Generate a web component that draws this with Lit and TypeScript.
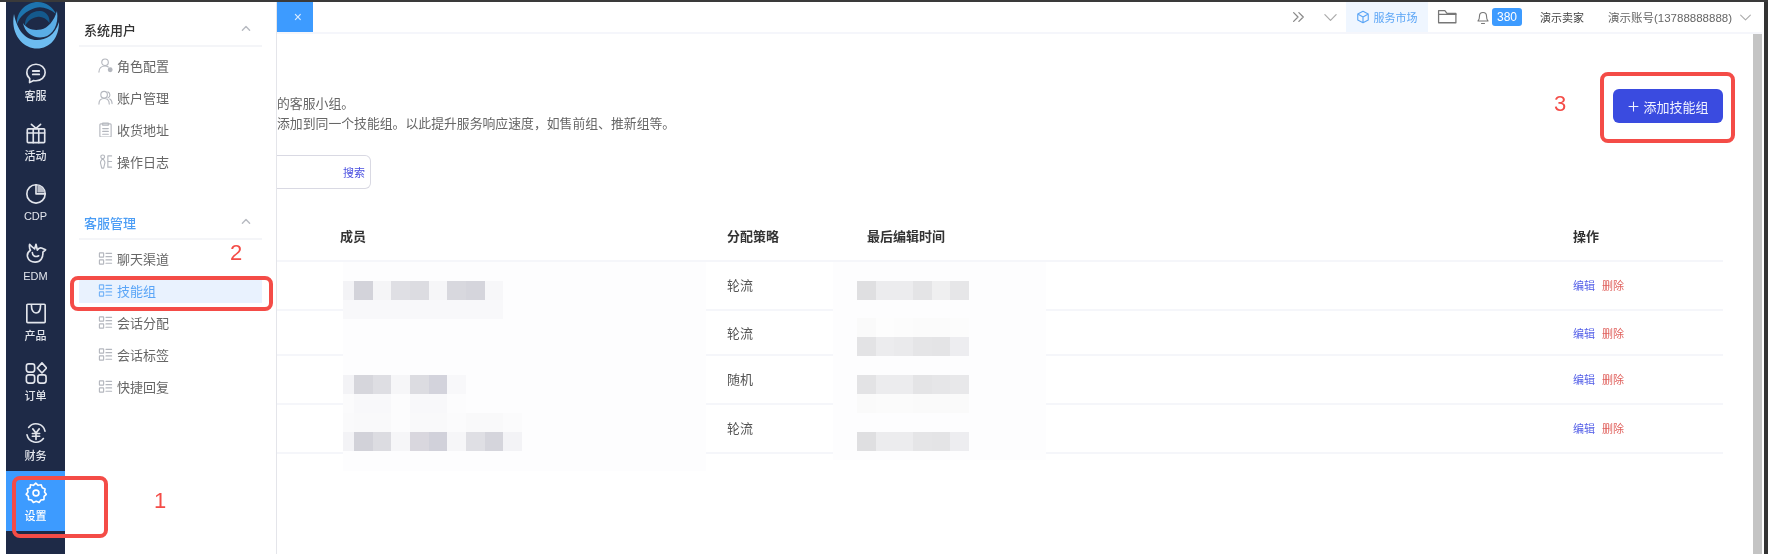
import { LitElement, html, css, svg } from "lit";
import { customElement } from "lit/decorators.js";

const I = (body: unknown, size = 24, vb = 24, sw = 1.8) =>
  html`<svg width=${size} height=${size} viewBox="0 0 ${vb} ${vb}" fill="none" stroke="currentColor" stroke-width=${sw} stroke-linecap="round" stroke-linejoin="round">${body}</svg>`;

const railIcons: Record<string, unknown> = {
  chat: svg`<path d="M12 2.500c5.600 0 10 3.900 10 9s-4.400 9-10 9c-.9 0-1.800-.1-2.600-.3L5 22.500l.2-4.400C3.200 16.400 2 14.100 2 11.500c0-5.100 4.400-9 10-9z"/><path d="M8.500 9.800h7M8.500 13.500h7" stroke-width="2"/>`,
  gift: svg`<rect x="2.500" y="7.500" width="19" height="15" rx="1"/><path d="M2.500 12h19M9 7.500v15M15 7.500v15"/><path d="M12 7 7 2.500M12 7l5-4.500"/>`,
  pie: svg`<circle cx="12" cy="13" r="10"/><path d="M12 3v10h10" /><path d="M13.500 3.500 13.500 11.500 21.500 11.500C21 7.500 17.500 4 13.500 3.500z" fill="#b9bdc9" stroke="none"/>`,
  bird: svg`<path d="M5 2.500C4.500 5.500 5 7.500 6 9c-3 2-4 5-3 8 1 3 4 5 8 5 6 0 9-5 8.500-11l3-2.500L18 6.500c-2-.5-3.500.5-4.500 2.500-.5-2-1-4.500-1.500-6.500-.5 2-1 3.500-1.500 5C9 6.500 7 5 5 2.500z"/><path d="M8 11.500c0 3.500 3 5.500 7 3.500"/>`,
  bag: svg`<path d="M3 2.500h18a1 1 0 0 1 1 1v18a1 1 0 0 1-1 1H3a1 1 0 0 1-1-1v-18a1 1 0 0 1 1-1z"/><path d="M7 3c0 6 2 9 5 9s5-3 5-9"/>`,
  order: svg`<rect x="1.500" y="2" width="9" height="9" rx="2.500"/><rect x="1.500" y="14" width="9" height="9" rx="2.500"/><rect x="14" y="14" width="9" height="9" rx="2.500"/><path d="M18.500 1l5 5.500-5 5.500-5-5.500z"/>`,
  yuan: svg`<path d="M21.800 10A10 10 0 0 0 4 6M2.200 14A10 10 0 0 0 20 18" /><path d="M8.500 7.500 12 12l3.500-4.500M8 12.500h8M8 15.500h8M12 12v7"/>`,
  gear: svg`<path d="M12 1.800l2.600 2.400 3.400-.6 1.200 3.300 3.200 1.300-.7 3.400 2 2.600-2.500 2.400-.1 3.500-3.400.4-2 2.800-3.200-1.300-3.200 1.300-2-2.800-3.400-.4-.1-3.500-2.500-2.400 2-2.600-.7-3.400 3.200-1.300L6 3.600l3.400.6z" transform="translate(0 -.5) scale(.98)"/><circle cx="12" cy="12" r="3.200"/>`,
};

const panelIcons: Record<string, unknown> = {
  role: svg`<circle cx="7.500" cy="4.500" r="3.500"/><path d="M1 15c0-4 2.500-6.500 6.500-6.500 1.500 0 2.500.4 3.500 1"/><circle cx="13" cy="12.500" r="2.600" fill="currentColor" stroke="none"/>`,
  users: svg`<circle cx="6.500" cy="5" r="3.500"/><path d="M1 15c0-4 2-6 5.500-6s5.500 2 5.500 6"/><path d="M10.500 2a3.500 3.500 0 0 1 0 6.500M12.500 9.500c1.500.8 2.500 2.500 2.500 5"/>`,
  clip: svg`<rect x="2" y="2" width="12" height="14" rx="1"/><path d="M5 1h6v2.500H5zM5 7h6M5 10h6M5 13h6"/>`,
  log: svg`<circle cx="5" cy="3" r="2"/><path d="M5 5c-2 2-3 4-2 6l1 4h2l1-4c1-2 0-4-2-6zM10.500 2v12h4M10.500 8h4M10.500 2h4"/>`,
  list: svg`<rect x="1.500" y="2" width="4.500" height="4.500" rx=".5"/><rect x="1.500" y="9.500" width="4.500" height="4.500" rx=".5"/><path d="M8.500 2.500h6M8.500 6h6M8.500 9.500h6M8.500 13h6"/>`,
};

const rail = [
  { icon: "chat", label: "客服" },
  { icon: "gift", label: "活动" },
  { icon: "pie", label: "CDP" },
  { icon: "bird", label: "EDM" },
  { icon: "bag", label: "产品" },
  { icon: "order", label: "订单" },
  { icon: "yuan", label: "财务" },
  { icon: "gear", label: "设置", active: true },
];

const rows = [
  { strategy: "轮流", short: false },
  { strategy: "轮流", short: true },
  { strategy: "随机", short: false },
  { strategy: "轮流", short: false },
];

const L = "#f8f8fa";
const memberBlocks = [
  { top: 19, cells: ["#f3f3f6", "#d3d3da", "#f5f5f7", "#dfdfe4", "#dcdce1", "#f6f6f8", "#d8d8de", "#d5d5dc", "#f7f7f9"] },
  { top: 38, cells: Array(9).fill(L) },
  { top: 113, cells: ["#f3f3f6", "#d6d6dc", "#dedee3", "#f6f6f8", "#dcdce1", "#d3d3dc", "#f8f8fa"] },
  { top: 132, cells: ["#fbfbfc", "#f8f8fa", "#f8f8fa", "#fcfcfd", "#f8f8fa", "#f8f8fa", "#fcfcfd"] },
  { top: 151, cells: ["#fafafb", "#f9f9fa", "#f9f9fa", "#fcfcfd", "#f9f9fa", "#f9f9fa", "#fbfbfc", "#f9f9fa", "#f9f9fa", "#fbfbfc"] },
  { top: 170, cells: ["#f3f3f6", "#d2d2d9", "#dcdce1", "#f6f6f8", "#d9d7de", "#d1d1da", "#f6f6f8", "#dfdfe4", "#d5d5dc", "#f3f3f6"] },
];
const timeBlocks = [
  { top: 19, cells: ["#dfdfe1", "#ececee", "#ececee", "#e4e4e6", "#efeff0", "#e6e6e8"] },
  { top: 56, cells: ["#fafafa", "#fdfdfd", "#fcfcfc", "#fbfbfb", "#fbfbfb", "#fcfcfc"] },
  { top: 75, cells: ["#e3e3e5", "#ececee", "#eaeaec", "#e5e5e7", "#e4e4e6", "#ededf0"] },
  { top: 113, cells: ["#e3e3e5", "#ececee", "#ececee", "#e4e4e6", "#e6e6e8", "#e8e8ea"] },
  { top: 132, cells: ["#fafafa", "#fbfbfb", "#fbfbfb", "#fafafa", "#fafafa", "#fafafa"] },
  { top: 170, cells: ["#dfdfe1", "#ececee", "#ececee", "#e5e5e7", "#e4e4e6", "#ededf0"] },
];

@customElement("app-root")
export class AppRoot extends LitElement {
  static styles = css`
    :host { display: block; width: 1768px; height: 554px; overflow: hidden; background: #fff;
      font-family: "Liberation Sans", "Noto Sans CJK SC", sans-serif; font-size: 13px; color: #555; }
    * { box-sizing: border-box; }
    .page { position: relative; width: 1768px; height: 554px; display: flex; flex-direction: column; filter: blur(0.5px); background: #fff; overflow: hidden; }
    .topline { height: 2px; background: #3a3a3a; flex: none; }
    .body { flex: 1; display: flex; min-height: 0; }
    .gutter { width: 6px; flex: none; background: #fff; }
    .rail { width: 59px; flex: none; background: #1e2a47; display: flex; flex-direction: column; color: #fff; }
    .logo { height: 49px; display: flex; justify-content: center; align-items: flex-start; overflow: hidden; padding-left: 1px; }
    .rail-item { height: 60px; display: flex; flex-direction: column; align-items: center; padding-top: 11px; color: #e2e5ec; font-size: 11px; line-height: 16px; gap: 4px; font-weight: 500; }
    .rail-item svg { display: block; flex: none; }
    .rail-item.active { background: #3d9bff; color: #fff; }
    .panel { width: 212px; flex: none; background: #fff; padding: 0 14px; border-right: 1px solid #e4e5ea; }
    .sec-head { height: 45px; padding: 11px 5px 0; display: flex; align-items: center; justify-content: space-between; border-bottom: 2px solid #f4f5f8; color: #333; font-weight: 500; }
    .sec-head .caret { color: #b8bbc2; display: flex; margin-right: 5px; }
    .section { margin-bottom: 18px; }
    .section.brand .sec-head { color: #4b9df5; }
    .items { padding-top: 2px; }
    .item { height: 32px; padding-left: 19px; display: flex; align-items: center; gap: 4px; color: #666; }
    .item svg { color: #b4b7be; flex: none; }
    .item.active { color: #5aa5f7; background: linear-gradient(#e9f2fe, #e9f2fe) center / 100% 25px no-repeat; }
    .item.active svg { color: #72b2f8; }
    .main { flex: 1; min-width: 0; display: flex; flex-direction: column; }
    .topbar { height: 32px; flex: none; display: flex; align-items: stretch; border-bottom: 2px solid #f5f6fb; }
    .tab { width: 36px; background: #3d9bff; color: #dcecff; display: flex; align-items: center; justify-content: flex-end; padding-right: 11px; font-size: 14px; }
    .spacer { flex: 1; }
    .tools { display: flex; align-items: center; height: 100%; font-size: 11px; }
    .glyph { color: #8a8a8a; display: flex; }
    .glyph.drop { margin-left: 18px; color: #aaa; }
    .glyph.end { margin-right: 10px; color: #aaa; }
    .market { height: 100%; width: 82px; background: #eff6ff; color: #5ba5f6; display: flex; align-items: center; justify-content: center; gap: 3px; margin: 0 9px 0 8px; }
    .bell { color: #777; display: flex; margin: 0 1px 0 17px; }
    .badge { width: 30px; height: 18px; border-radius: 3px; background: #3d9bff; color: #fff; font-size: 12px; display: flex; align-items: center; justify-content: center; }
    .seller { color: #444; margin-left: 18px; }
    .account { color: #666; margin: 0 7px 0 24px; font-size: 11.500px; }
    .folder { color: #777; display: flex; }
    .content { flex: 1; display: flex; min-height: 0; }
    .inner { flex: 1; min-width: 0; padding: 55px 30px 0 0; }
    .scrollbar { width: 9px; flex: none; background: #c4c4c4; }
    .edge-gap { width: 2px; flex: none; background: #fff; }
    .edge { width: 4px; flex: none; background: #333; }
    .head { display: flex; justify-content: space-between; align-items: flex-start; }
    .desc { margin-top: 5px; line-height: 20px; color: #666; white-space: nowrap; font-size: 12.850px; }
    .add { width: 110px; height: 34px; border: 0; border-radius: 6px; background: #3a4be0; color: #f0f2ff; font: inherit; display: flex; align-items: center; justify-content: center; gap: 3px; padding: 0; }
    .search { width: 94px; height: 34px; margin-top: 21px; border: 1px solid #d9d9e3; border-left: 0; border-radius: 0 6px 6px 0; display: flex; align-items: center; justify-content: flex-end; padding-right: 5px; color: #4a50e0; font-size: 11px; }
    .table { position: relative; margin-top: 22px; width: 1446px; }
    .tr { display: grid; grid-template-columns: 63px 387px 140px 706px 150px; align-items: center; height: 49px; padding-bottom: 2px; border-bottom: 2px solid #f5f6fa; color: #555; }
    .tr.short { height: 45px; padding-bottom: 0; }
    .tr.th { height: 51px; padding-bottom: 0; color: #333; font-weight: 700; }
    .ops { display: flex; gap: 7px; font-size: 11px; }
    .edit { color: #5560e8; }
    .del { color: #e0605c; }
    .patch { position: absolute; top: 51px; background: #fdfdfe; }
    .patch.members { left: 66px; width: 363px; height: 209px; }
    .patch.times { left: 556px; width: 213px; height: 198px; }
    .block { position: absolute; display: flex; height: 19px; }
    .patch.members .block { left: 0; }
    .patch.members .cell:first-child { width: 11px; }
    .patch.times .block { left: 24px; }
    .cell { width: 18.670px; height: 19px; flex: none; }
    .mark { position: absolute; border: 4px solid #f44c47; border-radius: 8px; }
    .mark.m1 { left: 12px; top: 476px; width: 96px; height: 62px; }
    .mark.m2 { left: 70px; top: 276px; width: 203px; height: 35px; }
    .mark.m3 { left: 1600px; top: 72px; width: 135px; height: 71px; }
    .num { position: absolute; color: #f44c47; font-size: 22px; line-height: 24px; }
    .n1 { left: 154px; top: 489px; }
    .n2 { left: 230px; top: 241px; }
    .n3 { left: 1554px; top: 92px; }
  `;

  private block(b: { top: number; cells: string[] }) {
    return html`<div class="block" style="top:${b.top}px">${b.cells.map((c) => html`<div class="cell" style="background:${c}"></div>`)}</div>`;
  }

  render() {
    const caret = html`<span class="caret">${I(svg`<path d="M3 9l4.500-4.500L12 9"/>`, 12, 15)}</span>`;
    const item = (icon: string, label: string, active = false) =>
      html`<div class="item ${active ? "active" : ""}">${I(panelIcons[icon], 15, 16, 1.2)}<span>${label}</span></div>`;
    return html`
      <div class="page">
        <div class="topline"></div>
        <div class="body">
          <div class="gutter"></div>
          <nav class="rail">
            <div class="logo">
              <svg width="46" height="47" viewBox="0 0 46 47" fill="none">
                <path d="M1 12C-3 32 10 46.500 24 46.500 37 46.500 46 36 46 20 42 33 33 38 24 38 12 38 4 28 1 12z" fill="#6dbcf0"/>
                <path d="M10 21C12 32 22 37 31 35 40 33 46 23 44 9 41 19 35 26 28 27.500 20 29 14 27 10 21z" fill="#5aade6"/>
                <path d="M4 22C3 10 13 0 25 0 33 0 40 5 43 12 36 6 28 4 22 6 13 9 7 14 4 22z" fill="#1d74ae"/>
                <path d="M12 24C11 15 19 8 28 9 34 10 37 15 36.500 21 33 16 28 14 24 15 18 16 15 19 12 24z" fill="#14598c"/>
              </svg>
            </div>
            ${rail.map((r) => html`
              <div class="rail-item ${r.active ? "active" : ""}">${I(railIcons[r.icon], 22)}<span>${r.label}</span></div>`)}
          </nav>
          <aside class="panel">
            <section class="section">
              <div class="sec-head"><span>系统用户</span>${caret}</div>
              <div class="items">
                ${item("role", "角色配置")}${item("users", "账户管理")}${item("clip", "收货地址")}${item("log", "操作日志")}
              </div>
            </section>
            <section class="section brand">
              <div class="sec-head"><span>客服管理</span>${caret}</div>
              <div class="items">
                ${item("list", "聊天渠道")}${item("list", "技能组", true)}${item("list", "会话分配")}${item("list", "会话标签")}${item("list", "快捷回复")}
              </div>
            </section>
          </aside>
          <div class="main">
            <header class="topbar">
              <div class="tab">×</div>
              <div class="spacer"></div>
              <div class="tools">
                <span class="glyph">${I(svg`<path d="M3 3l5 5-5 5M9 3l5 5-5 5"/>`, 14, 16, 1.5)}</span>
                <span class="glyph drop">${I(svg`<path d="M2 5l6 6 6-6"/>`, 15, 16, 1.3)}</span>
                <div class="market">
                  ${I(svg`<path d="M8 1.500l6 3.200v6.600l-6 3.200-6-3.200V4.700zM2 4.700l6 3.300 6-3.300M8 8v6.500"/>`, 14, 16, 1.3)}
                  <span>服务市场</span>
                </div>
                <span class="folder">${I(svg`<path d="M1.500 15V3.500h6l2 2.500h8.500v9z"/><path d="M1.500 7h16.500"/>`, 21, 20, 1.2)}</span>
                <span class="bell">${I(svg`<path d="M3 12c1-1 1.500-2 1.500-5a3.500 3.500 0 0 1 7 0c0 3 .5 4 1.500 5zM6.500 14.500h3"/>`, 16, 16, 1.1)}</span>
                <span class="badge">380</span>
                <span class="seller">演示卖家</span>
                <span class="account">演示账号(13788888888)</span>
                <span class="glyph end">${I(svg`<path d="M2 5l6 6 6-6"/>`, 13, 16, 1.3)}</span>
              </div>
            </header>
            <div class="content">
              <div class="inner">
                <div class="head">
                  <div class="desc">
                    <div>的客服小组。</div>
                    <div>添加到同一个技能组。以此提升服务响应速度，如售前组、推新组等。</div>
                  </div>
                  <button class="add">${I(svg`<path d="M8 2.500v11M2.500 8h11"/>`, 13, 16, 1.3)}<span>添加技能组</span></button>
                </div>
                <div class="search">搜索</div>
                <div class="table">
                  <div class="tr th"><span></span><span>成员</span><span>分配策略</span><span>最后编辑时间</span><span>操作</span></div>
                  ${rows.map((r) => html`
                    <div class="tr ${r.short ? "short" : ""}">
                      <span></span><span></span><span>${r.strategy}</span><span></span>
                      <div class="ops"><span class="edit">编辑</span><span class="del">删除</span></div>
                    </div>`)}
                  <div class="patch members">${memberBlocks.map((b) => this.block(b))}</div>
                  <div class="patch times">${timeBlocks.map((b) => this.block(b))}</div>
                </div>
              </div>
              <div class="scrollbar"></div>
            </div>
          </div>
          <div class="edge-gap"></div>
          <div class="edge"></div>
        </div>
        <div class="mark m1"></div>
        <div class="mark m2"></div>
        <div class="mark m3"></div>
        <span class="num n1">1</span>
        <span class="num n2">2</span>
        <span class="num n3">3</span>
      </div>
    `;
  }
}
